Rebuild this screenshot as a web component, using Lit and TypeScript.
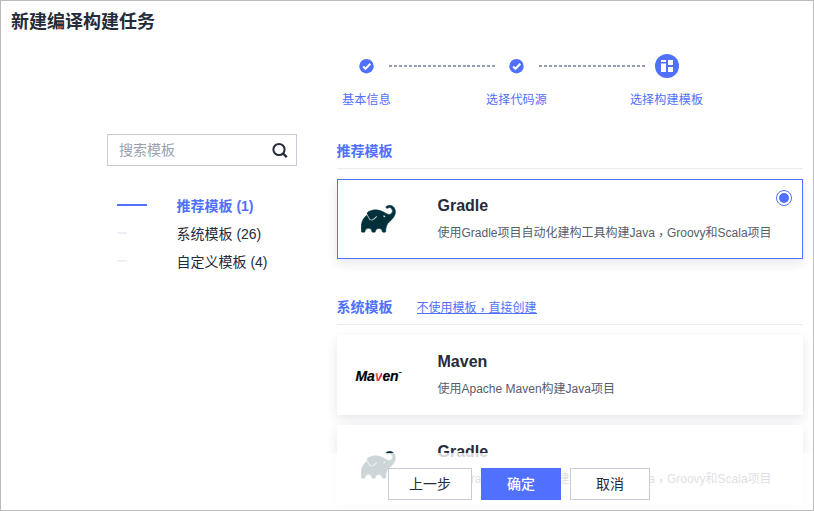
import { LitElement, html, css } from "lit";
import { customElement, property } from "lit/decorators.js";
import { classMap } from "lit/directives/class-map.js";

const elephant = html`<svg width="35" height="28" viewBox="-0.1 3.05 24.5 18.3" preserveAspectRatio="none" fill="#02303a" stroke="#02303a" stroke-width="0.35">
  <path d="M22.695 4.297a3.807 3.807 0 0 0-5.29-.09.368.368 0 0 0 0 .533l.46.47a.363.363 0 0 0 .474.032 2.182 2.182 0 0 1 2.86 3.291c-3.023 3.02-7.056-5.447-16.211-1.083a1.24 1.24 0 0 0-.534 1.745l1.571 2.713a1.238 1.238 0 0 0 1.681.461l.037-.02-.029.02.688-.384a16.083 16.083 0 0 0 2.193-1.635.384.384 0 0 1 .499-.016.357.357 0 0 1 .016.534 16.435 16.435 0 0 1-2.316 1.741H8.77l-.696.39a1.958 1.958 0 0 1-.963.25 1.987 1.987 0 0 1-1.726-.989L3.9 9.696C1.06 11.72-.686 15.603.26 20.522a.363.363 0 0 0 .354.296h1.675a.363.363 0 0 0 .37-.331 2.478 2.478 0 0 1 4.915 0 .36.36 0 0 0 .357.317h1.638a.363.363 0 0 0 .357-.317 2.478 2.478 0 0 1 4.914 0 .363.363 0 0 0 .358.317h1.627a.363.363 0 0 0 .363-.357c.037-2.294.656-4.93 2.42-6.25 6.108-4.57 4.502-8.486 3.088-9.9zm-6.229 6.901l-1.165-.584a.73.73 0 1 1 1.165.587z"/>
</svg>`;

const check = html`<svg width="15" height="15" viewBox="0 0 15 15">
  <circle cx="7.5" cy="7.2" r="7.2" fill="#5170ff"/>
  <path d="M4.1 7.5l2.4 2.3 4.8-5" fill="none" stroke="#fff" stroke-width="2"/>
</svg>`;

const grid = html`<svg width="24" height="24" viewBox="0 0 24 24">
  <circle cx="12" cy="12" r="12" fill="#5170ff"/>
  <path d="M6 6h5v2H6zM6 10h5v8H6zM13 6h5v5h-5zM13 13h5v5h-5z" fill="#fff"/>
  <path d="M6 9h5v1H6z" fill="#a8b8ff"/>
</svg>`;

/* The TC face centres the full-width comma; it is lowered back to the baseline. */
const comma = html`<span class="comma">，</span>`;
const commaStyle = css`
  .comma { font-family: "Noto Sans CJK TC", sans-serif; line-height: 1; position: relative; top: 3px; }
`;

@customElement("template-card")
class TemplateCard extends LitElement {
  @property() name = "";
  @property({ type: Boolean }) selected = false;
  @property({ attribute: false }) logo: unknown;
  @property({ attribute: false }) description: unknown;

  static styles = [commaStyle, css`
    :host { display: block; }
    .card {
      box-sizing: border-box; height: 80px; display: flex; align-items: flex-start;
      border: 1px solid transparent; background: #fff; position: relative;
      box-shadow: 0 4px 10px rgba(40, 50, 70, 0.11);
    }
    .selected { border-color: #5170ff; }
    .logo { width: 80px; height: 78px; display: flex; align-items: center; justify-content: center; flex: none; }
    .text { padding: 14px 0 0 19.5px; }
    .name { font-size: 16px; line-height: 24px; font-weight: 700; color: #252b3a; }
    .desc { font-size: 12px; line-height: 18px; margin-top: 6px; color: #575d6c; white-space: nowrap; }
    .radio {
      position: absolute; top: 10px; right: 10px; width: 16px; height: 16px; box-sizing: border-box;
      border: 1px solid #5170ff; border-radius: 50%; display: grid; place-items: center;
    }
    .dot { width: 10px; height: 10px; border-radius: 50%; background: #5170ff; }
    .maven {
      font-size: 14px; font-weight: 700; font-style: italic; color: #000; display: flex;
      line-height: 16px; padding: 2px 0 0 1px; letter-spacing: -0.1px; -webkit-text-stroke: 0.2px;
    }
    .v { background: linear-gradient(90deg, #f9a01b, #e8403c 40%, #c8106c); -webkit-background-clip: text; color: transparent; }
    .tm { font-size: 3px; line-height: 10px; }
  `];

  render() {
    return html`<div class=${classMap({ card: true, selected: this.selected })}>
      <div class="logo">${this.logo}</div>
      <div class="text">
        <div class="name">${this.name}</div>
        <div class="desc">${this.description}</div>
      </div>
      ${this.selected ? html`<div class="radio"><div class="dot"></div></div>` : ""}
    </div>`;
  }
}

@customElement("app-root")
class AppRoot extends LitElement {
  static styles = [commaStyle, css`
    :host {
      display: block;
      font-family: "Liberation Sans", "Noto Sans CJK SC", sans-serif;
      color: #252b3a;
    }
    .page {
      box-sizing: border-box; width: 814px; height: 511px; border: 1px solid #bbb;
      background: #fff; overflow: hidden; position: relative;
    }
    h1 { margin: 0; padding: 7px 0 0 10px; font-size: 18px; line-height: 28px; font-weight: 700; height: 40px; box-sizing: border-box; }
    .steps { display: flex; margin-left: 290.5px; height: 93px; padding-top: 12px; box-sizing: border-box; }
    .step { width: 150px; display: flex; flex-direction: column; align-items: center; position: relative; }
    .mark { height: 26px; display: flex; align-items: center; }
    .label { font-size: 12px; line-height: 18px; margin-top: 12px; color: #5170ff; letter-spacing: 0.2px; }
    .line {
      position: absolute; left: 97.5px; top: 12px; width: 106px; height: 2px; z-index: 1;
      background: repeating-linear-gradient(90deg, #959bb3 0 3px, transparent 3px 4.9px);
    }
    .body { display: flex; margin-left: 106px; }
    aside { width: 190px; margin-right: 40px; }
    .search {
      box-sizing: border-box; height: 32px; border: 1px solid #c8cbd8; display: flex;
      align-items: center; justify-content: space-between; padding: 0 8px 0 11px;
      font-size: 14px; line-height: 28px; color: #9a9fb0;
    }
    nav { padding: 26px 0 0 10px; }
    .item { display: flex; height: 28px; line-height: 28px; font-size: 14px; }
    .tick { width: 10px; height: 2px; background: #eeeff7; margin: 12px 49.5px 0 0; flex: none; }
    .active { color: #5170ff; font-weight: 700; }
    .active .tick { width: 30px; margin-right: 29.5px; background: #5170ff; }
    main { width: 466px; }
    .head { height: 35px; box-sizing: border-box; border-bottom: 1px solid #ebecf0; display: flex; align-items: flex-start; gap: 24px; margin-bottom: 10px; color: #5170ff; }
    .head b { font-size: 14px; line-height: 34px; margin-left: -0.5px; }
    .head a { font-size: 12px; line-height: 14px; margin-top: 11px; height: 12px; border-bottom: 1px solid #5170ff; white-space: nowrap; }
    .group + .group { margin-top: 31px; }
    .cards { display: flex; flex-direction: column; gap: 10px; }
    .footer {
      position: absolute; left: 0; right: 0; bottom: 0; height: 57px; box-sizing: border-box;
      background: rgba(255, 255, 255, 0.8); display: flex; gap: 9px; padding: 15px 0 0 387px;
    }
    .btn {
      box-sizing: border-box; width: 80px; height: 32px; border: 1px solid #c6cadb; background: #fff;
      font-size: 14px; line-height: 30px; text-align: center;
    }
    .wide { width: 84px; }
    .primary { background: #5170ff; border-color: #5170ff; color: #fff; font-weight: 500; }
  `];

  render() {
    const steps = [
      { icon: check, label: "基本信息" },
      { icon: check, label: "选择代码源" },
      { icon: grid, label: "选择构建模板" },
    ];
    const nav = ["推荐模板 (1)", "系统模板 (26)", "自定义模板 (4)"];
    const gradle = html`使用Gradle项目自动化建构工具构建Java${comma}Groovy和Scala项目`;
    const maven = html`<span class="maven">Ma<span class="v">v</span>en<span class="tm">™</span></span>`;
    return html`<div class="page">
      <h1>新建编译构建任务</h1>
      <div class="steps">
        ${steps.map((s, i) => html`<div class="step">
          <div class="mark">${s.icon}</div>
          <div class="label">${s.label}</div>
          ${i < 2 ? html`<div class="line"></div>` : ""}
        </div>`)}
      </div>
      <div class="body">
        <aside>
          <div class="search">
            <span>搜索模板</span>
            <svg width="16" height="16" viewBox="0 0 16 16" fill="none" stroke="#252b3a" stroke-width="2">
              <circle cx="7" cy="7.5" r="5.6"/><path d="M11 11.5l3.8 3.6" stroke-width="2.4"/>
            </svg>
          </div>
          <nav>
            ${nav.map((n, i) => html`<div class=${classMap({ item: true, active: i === 0 })}><span class="tick"></span><span>${n}</span></div>`)}
          </nav>
        </aside>
        <main>
          <section class="group">
            <div class="head"><b>推荐模板</b></div>
            <template-card name="Gradle" selected .logo=${elephant} .description=${gradle}></template-card>
          </section>
          <section class="group">
            <div class="head"><b>系统模板</b><a>不使用模板${comma}直接创建</a></div>
            <div class="cards">
              <template-card name="Maven" .logo=${maven} .description=${"使用Apache Maven构建Java项目"}></template-card>
              <template-card name="Gradle" .logo=${elephant} .description=${gradle}></template-card>
            </div>
          </section>
        </main>
      </div>
      <div class="footer">
        <div class="btn wide">上一步</div>
        <div class="btn primary">确定</div>
        <div class="btn">取消</div>
      </div>
    </div>`;
  }
}
